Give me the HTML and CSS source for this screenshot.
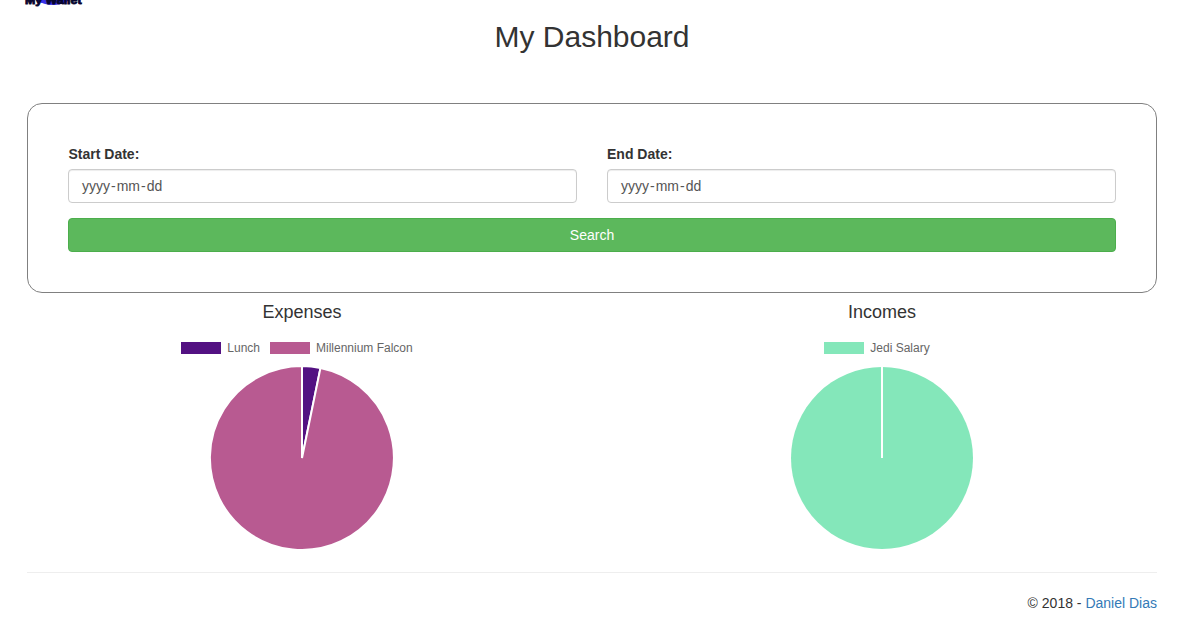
FILE: index.html
```html
<!DOCTYPE html>
<html lang="en">
<head>
<meta charset="utf-8">
<title>My Wallet</title>
<link rel="stylesheet" href="styles.css">
</head>
<body>
<header class="brand">
  <svg class="logo" width="66" height="8" viewBox="0 0 66 8">
    <ellipse cx="32" cy="-11" rx="23" ry="16" fill="#3a32e8"/>
    <text class="logo-text" x="4" y="3.5" textLength="56.5" lengthAdjust="spacingAndGlyphs">My Wallet</text>
  </svg>
</header>
<main class="container">
  <h1 class="title">My Dashboard</h1>
  <form class="filter">
    <div class="fields">
      <div class="field">
        <span class="label start">Start Date:</span>
        <div class="date-input"><span class="part">yyyy</span>-<span class="part">mm</span>-<span class="part">dd</span></div>
      </div>
      <div class="field">
        <span class="label">End Date:</span>
        <div class="date-input"><span class="part">yyyy</span>-<span class="part">mm</span>-<span class="part">dd</span></div>
      </div>
    </div>
    <button class="search" type="button">Search</button>
  </form>
  <section class="charts">
    <div class="chart">
      <h4 class="chart-title">Expenses</h4>
      <div class="legend">
        <span class="item"><span class="swatch lunch"></span>Lunch</span>
        <span class="item"><span class="swatch falcon"></span>Millennium Falcon</span>
      </div>
      <svg class="pie" width="184" height="184" viewBox="-92 -92 184 184">
        <path d="M0 0V-92A92 92 0 0 1 18.5 -90.1Z" fill="#531182" stroke="#fff" stroke-width="2" stroke-linejoin="bevel"/>
        <path d="M0 0L18.5 -90.1A92 92 0 1 1 0 -92Z" fill="#b85a91" stroke="#fff" stroke-width="2" stroke-linejoin="bevel"/>
      </svg>
    </div>
    <div class="chart">
      <h4 class="chart-title">Incomes</h4>
      <div class="legend">
        <span class="item"><span class="swatch jedi"></span>Jedi Salary</span>
      </div>
      <svg class="pie" width="184" height="184" viewBox="-92 -92 184 184">
        <circle r="91" fill="#84e7ba"/>
        <path d="M0 0V-92" stroke="#fff" stroke-width="2"/>
      </svg>
    </div>
  </section>
  <footer class="footer">© 2018 - <a class="author" href="#">Daniel Dias</a></footer>
</main>
</body>
</html>
```
FILE: styles.css
```css
* { box-sizing: border-box; }
body {
  margin: 0;
  overflow: hidden;
  background: #fff;
  color: #333;
  font: 14px/20px "Liberation Sans", Arial, sans-serif;
}
.brand { height: 20px; padding-left: 21px; }
.logo { display: block; }
.logo-text { font-size: 11px; font-weight: 700; fill: #07052e; stroke: #07052e; stroke-width: .9px; }
.container { width: 1130px; margin-left: 27px; }
.title { margin: 0 0 50px; font-size: 30px; font-weight: 400; line-height: 33px; text-align: center; }
.filter { padding: 40px; border: 1px solid #808080; border-radius: 15px; }
.fields { display: grid; grid-template-columns: 1fr 1fr; gap: 30px; margin-bottom: 15px; }
.label { display: block; margin-bottom: 5px; font-weight: 700; }
.start { padding-left: .5px; }
.date-input {
  height: 34px;
  padding: 6px 12px;
  border: 1px solid #ccc;
  border-radius: 4px;
  color: #555;
  box-shadow: inset 0 1px 1px rgba(0, 0, 0, .075);
}
.part { padding: 0 1px; }
.search {
  display: block;
  width: 100%;
  height: 34px;
  padding: 0;
  border: 1px solid #4cae4c;
  border-radius: 4px;
  background: #5cb85c;
  color: #fff;
  font: inherit;
}
.charts { display: grid; grid-template-columns: 550px 550px; gap: 30px; padding-top: 9px; }
.chart { display: flex; flex-direction: column; align-items: center; }
.chart-title { margin: 0 0 20px; font-size: 18px; font-weight: 400; line-height: 20px; }
.legend { display: flex; height: 12px; margin-bottom: 12px; color: #666; font-size: 12px; line-height: 12px; }
.item { display: flex; gap: 6px; margin-right: 10px; }
.swatch { width: 40px; height: 12px; }
.lunch { background: #531182; }
.falcon { background: #b85a91; }
.jedi { background: #84e7ba; }
.pie { display: block; }
.footer { margin-top: 22px; padding-top: 20px; border-top: 1px solid #eee; text-align: right; }
.author { color: #337ab7; text-decoration: none; }
```
